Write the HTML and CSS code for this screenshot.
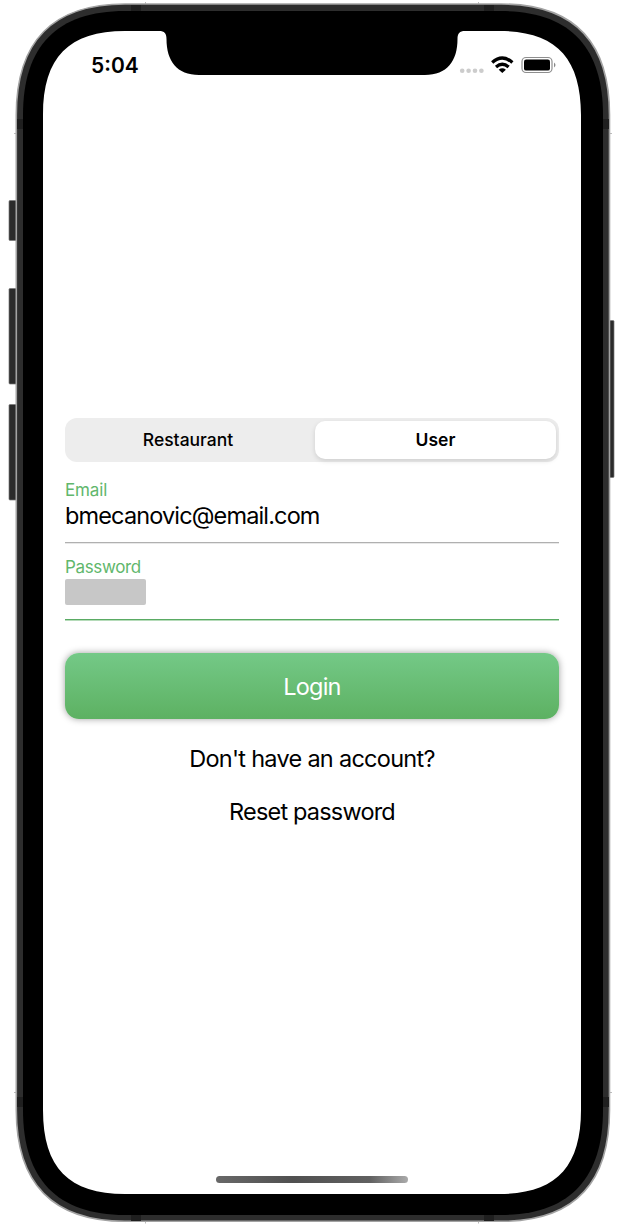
FILE: index.html
```html
<!DOCTYPE html>
<html lang="en">
<head>
<meta charset="utf-8">
<title>Login</title>
<link rel="stylesheet" href="styles.css">
</head>
<body>
<div class="phone">
  <svg class="frame" viewBox="0 0 621 1225" aria-hidden="true">
    <defs>
      <linearGradient id="home" x1="0" x2="1"><stop offset="0" stop-color="#686868"/><stop offset=".4" stop-color="#505050"/><stop offset=".8" stop-color="#606060"/><stop offset="1" stop-color="#aaa"/></linearGradient>
    </defs>
    <g fill="#2b2b2b" stroke="#777" stroke-width=".7">
      <rect x="9" y="200.500" width="9" height="40" rx="1"/>
      <rect x="9" y="288.500" width="9" height="95.500" rx="1"/>
      <rect x="9" y="404.500" width="9" height="95.500" rx="1"/>
      <rect x="606" y="320.500" width="8" height="157" rx="1"/>
    </g>
    <path d="M16.300 115C16.300 41 53 4 125 4H501C573 4 609.500 41 609.500 115V1110C609.500 1184 573 1221.300 501 1221.300H125C53 1221.300 16.300 1184 16.300 1110Z" fill="#2d2d2d" stroke="#a3a3a3" stroke-width="1.600"/>
    <g fill="#1f1f1f">
      <rect x="131" y="5" width="10" height="6"/><rect x="484" y="5" width="10" height="6"/>
      <rect x="131" y="1215" width="10" height="6"/><rect x="484" y="1215" width="10" height="6"/>
      <rect x="17" y="119" width="6" height="10"/><rect x="603" y="119" width="6" height="10"/>
      <rect x="17" y="1097" width="6" height="10"/><rect x="603" y="1097" width="6" height="10"/>
    </g>
    <path d="M145.500 2v2M478.500 2v2M145.500 1221.500v2M478.500 1221.500v2M14 133.500h2M610 133.500h2M14 1092.500h2M610 1092.500h2" stroke="#aaa" stroke-width=".8"/>
    <path d="M23 115C23 46 57 11 125 11H501C569 11 603 46 603 115V1110C603 1179 569 1215 501 1215H125C57 1215 23 1179 23 1110Z" fill="#000"/>
    <path d="M43 115C43 57 69 31 125 31H159C164.500 31 166.500 33.500 166.500 39C166.500 61 177 75 199 75H425C447 75 457.500 61 457.500 39C457.500 33.500 459.500 31 465 31H499C555 31 581 57 581 115V1110C581 1168 555 1194 499 1194H125C69 1194 43 1168 43 1110Z" fill="#fff"/>
  </svg>
  <main class="screen">
    <header class="status">
      <span class="time">5:04</span>
      <svg class="status-icons" width="98" height="20" viewBox="458 55 98 20" aria-hidden="true">
        <g fill="#ccc"><circle cx="462.200" cy="70.700" r="2.300"/><circle cx="468.600" cy="70.700" r="2.300"/><circle cx="475" cy="70.700" r="2.300"/><circle cx="481.400" cy="70.700" r="2.300"/></g>
        <g fill="none" stroke="#000" stroke-width="3.300"><path d="M492.200 62.500Q502.300 53.500 512.400 62.500"/><path d="M496 66.900Q502.300 61.500 508.600 66.900"/></g>
        <path d="M498.700 69.700Q502.300 67 505.900 69.700L502.300 73Z"/>
        <rect x="522" y="57.500" width="30" height="15" rx="4" fill="none" stroke="#8e8e8e" stroke-width="1.200"/>
        <rect x="524" y="59.400" width="26" height="11.200" rx="2.200"/>
        <path d="M554 62.500Q557 65 554 67.500Z" fill="#888"/>
      </svg>
    </header>
    <form class="login">
      <div class="segments">
        <span class="segment unselected">Restaurant</span>
        <span class="segment selected">User</span>
      </div>
      <div class="field email"><label class="label">Email</label><span class="value">bmecanovic@email.com</span></div>
      <div class="field password"><label class="label">Password</label><span class="mask"></span></div>
      <button class="submit" type="button">Login</button>
      <a class="link signup">Don't have an account?</a>
      <a class="link reset">Reset password</a>
    </form>
    <svg class="home-bar" width="192" height="7" viewBox="0 0 192 7" aria-hidden="true"><rect width="192" height="7" rx="3.500" fill="url(#home)"/></svg>
  </main>
</div>
</body>
</html>
```
FILE: styles.css
```css
* { box-sizing: border-box; }
body { margin: 0; background: #fff; color: #000; font-family: Inter, "Liberation Sans", sans-serif; }
.phone { position: relative; width: 621px; height: 1225px; padding: 31px 40px 31px 43px; overflow: hidden; }
.frame { position: absolute; inset: 0; width: 621px; height: 1225px; }
.screen { position: relative; display: flex; flex-direction: column; align-items: center; height: 1163px; }
.status { display: flex; align-items: flex-start; justify-content: space-between; width: 100%; height: 387px; padding: 24px 25px 0 48px; }
.time { font-size: 21px; line-height: 21px; font-weight: 600; }
.status-icons { display: block; }
.login { display: flex; flex-direction: column; align-items: center; width: 494px; }
.segments { display: grid; grid-template-columns: 1fr 1fr; width: 100%; height: 44px; padding: 3px; border-radius: 12px; background: #ededed; }
.segment { display: flex; align-items: center; justify-content: center; padding-bottom: 1px; border-radius: 10px; font-size: 17.500px; font-weight: 500; }
.unselected { padding-right: 4px; }
.selected { margin-left: 3px; background: #fff; font-weight: 600; box-shadow: 0 2px 5px rgba(0,0,0,.13); }
.field { display: flex; flex-direction: column; align-items: flex-start; width: 100%; border-bottom: 1px solid #b0b0b0; box-shadow: 0 1px #e8e8e8; }
.email { height: 81px; padding-top: 17px; }
.password { height: 77px; padding-top: 14px; border-bottom-color: #5aab64; box-shadow: 0 1px #b5dbb9; }
.label { color: #61b76c; font-size: 17px; line-height: 21px; letter-spacing: -.35px; }
.email .label { padding-top: 1px; line-height: 20px; letter-spacing: -.15px; }
.value { font-size: 23.500px; line-height: 31px; letter-spacing: -.86px; }
.mask { width: 81px; height: 26px; margin-top: 1px; border-radius: 2px; background: #c7c7c7; }
.submit { width: 100%; height: 66px; margin-top: 33.400px; padding: 0; border: 0; border-radius: 14px; background: linear-gradient(#74c987, #5db162); box-shadow: 0 0 7px rgba(0,0,0,.38); color: #fff; font: 23.500px Inter, sans-serif; letter-spacing: -.8px; }
.link { font-size: 23.500px; line-height: 30px; letter-spacing: -.72px; }
.signup { margin-top: 24.600px; }
.reset { margin-top: 23px; letter-spacing: -.82px; }
.home-bar { display: block; margin-top: auto; margin-bottom: 11px; }
```
